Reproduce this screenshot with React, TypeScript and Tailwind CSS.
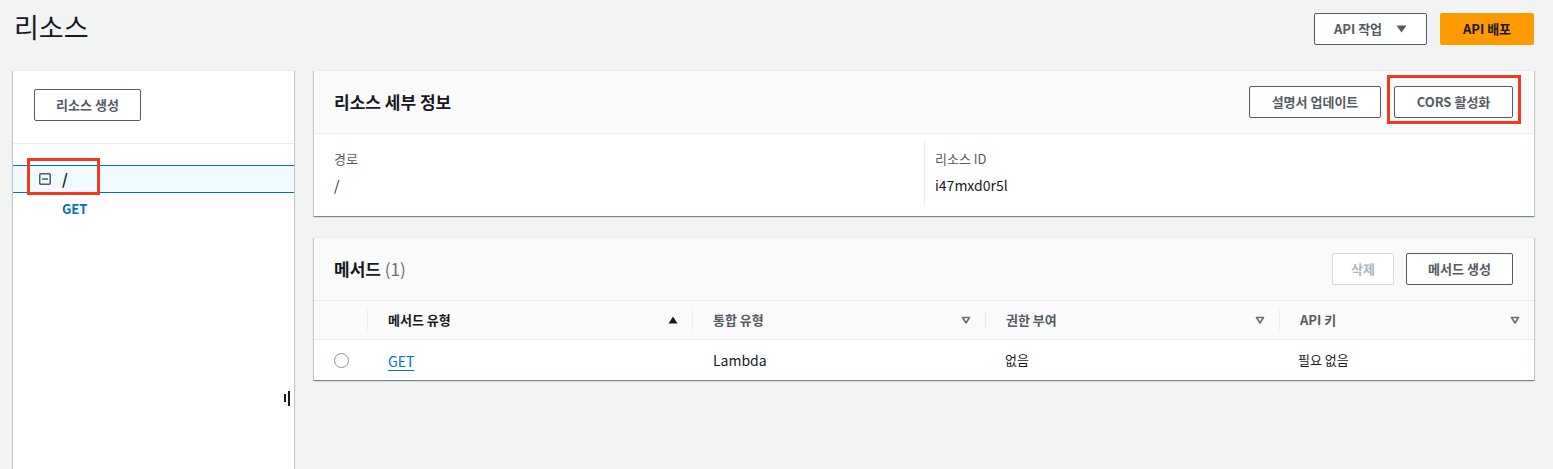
const panelShadow =
  "shadow-[0_1px_1px_0_rgba(0,28,36,0.3),1px_1px_1px_0_rgba(0,28,36,0.15),-1px_1px_1px_0_rgba(0,28,36,0.15)] border-t border-[#eaeded]";

function SortUp() {
  return (
    <svg width="10" height="8" viewBox="0 0 10 8">
      <path d="M5 0.5 L9.5 7.5 L0.5 7.5 Z" fill="#16191f" />
    </svg>
  );
}

function SortNone() {
  return (
    <svg width="10" height="8" viewBox="0 0 10 8">
      <path d="M1.5 1.5 L8.5 1.5 L5 7 Z" fill="none" stroke="#687078" strokeWidth="1.6" strokeLinejoin="round" />
    </svg>
  );
}

function HeadCell({ label, sorted, first }: { label: string; sorted?: boolean; first?: boolean }) {
  return (
    <div className="relative flex items-center justify-between h-full pl-[21px] pr-[14px]">
      <span className="absolute left-0 top-[9px] h-[20px] w-px bg-[#eaeded]" />
      <span className={"text-[13px] font-bold " + (first ? "text-[#16191f]" : "text-[#545b64]")}>{label}</span>
      {sorted ? <SortUp /> : <SortNone />}
    </div>
  );
}

export default function App() {
  return (
    <div className="h-[469px] overflow-hidden bg-[#f2f3f3] font-['Noto_Sans_CJK_KR',sans-serif] text-[#16191f] flex flex-col">
      {/* page header */}
      <header className="flex items-start justify-between pl-[14px] pr-[19px] pt-[12px] h-[70px] shrink-0">
        <h1 className="text-[27px] leading-[30px] font-normal">리소스</h1>
        <div className="flex gap-[13px] pt-[1px]">
          <button className="h-[32px] w-[113px] flex items-center justify-center gap-[14px] border border-[#545b64] rounded-[2px] bg-white text-[13px] font-bold text-[#545b64]">
            <span>API 작업</span>
            <svg width="11" height="8" viewBox="0 0 11 8">
              <path d="M0.5 0.5 L10.5 0.5 L5.5 7.5 Z" fill="#545b64" />
            </svg>
          </button>
          <button className="h-[32px] w-[94px] flex items-center justify-center rounded-[2px] bg-[#ff9900] text-[13px] font-bold text-[#16191f]">
            API 배포
          </button>
        </div>
      </header>

      <div className="flex flex-1 pl-[13px] pr-[19px] gap-[20px]">
        {/* resource tree */}
        <aside className={"relative w-[281px] shrink-0 bg-white " + panelShadow}>
          <div className="h-[73px] px-[21px] pt-[18px] border-b border-[#eaeded]">
            <button className="h-[32px] w-[107px] border border-[#545b64] rounded-[2px] bg-white text-[13px] font-bold text-[#545b64]">
              리소스 생성
            </button>
          </div>
          <div className="pt-[21px]">
            <div className="relative h-[28px] flex items-center border-y border-[#0073bb] bg-[#f1faff] pl-[26px]">
              <svg width="12" height="12" viewBox="0 0 12 12">
                <rect x="0.75" y="0.75" width="10.5" height="10.5" rx="1" fill="none" stroke="#545b64" strokeWidth="1.5" />
                <path d="M3 6 H9" stroke="#545b64" strokeWidth="1.5" />
              </svg>
              <span className="ml-[11px] text-[15px] font-bold text-[#16191f]">/</span>
              <span className="absolute left-[14px] top-[-8px] w-[73px] h-[37px] border-[3px] border-[#ee3a1f]" />
            </div>
            <div className="pl-[49px] pt-[6px] text-[13px] font-bold text-[#0073bb] leading-[20px]">GET</div>
          </div>
          <span className="absolute left-[271px] top-[323px] w-[2px] h-[8px] bg-[#16191f]" />
          <span className="absolute left-[275px] top-[320px] w-[2px] h-[15px] bg-[#16191f]" />
        </aside>

        {/* right column */}
        <main className="flex-1 flex flex-col gap-[21px]">
          {/* resource details */}
          <section className={"bg-white " + panelShadow}>
            <div className="h-[63px] flex items-center justify-between px-[20px] bg-[#fafafa] border-b border-[#eaeded]">
              <h2 className="text-[17px] font-bold">리소스 세부 정보</h2>
              <div className="flex items-center gap-[13px] pr-[1px]">
                <button className="h-[32px] w-[132px] border border-[#545b64] rounded-[2px] bg-white text-[13px] font-bold text-[#545b64]">
                  설명서 업데이트
                </button>
                <div className="relative">
                  <button className="h-[32px] w-[119px] border border-[#545b64] rounded-[2px] bg-white text-[13px] font-bold text-[#545b64]">
                    CORS 활성화
                  </button>
                  <span className="absolute left-[-7px] top-[-11px] w-[134px] h-[49px] border-[3px] border-[#ee3a1f]" />
                </div>
              </div>
            </div>
            <div className="grid grid-cols-2 px-[20px] pt-[6px] pb-[10px]">
              <div className="h-[66px] pt-[10px]">
                <div className="text-[13px] leading-[18px] text-[#545b64]">경로</div>
                <div className="mt-[7px] text-[14px] leading-[20px]">/</div>
              </div>
              <div className="h-[66px] pt-[10px] pl-[10px] border-l border-[#eaeded]">
                <div className="text-[13px] leading-[18px] text-[#545b64]">리소스 ID</div>
                <div className="mt-[7px] text-[14px] leading-[20px]">i47mxd0r5l</div>
              </div>
            </div>
          </section>

          {/* methods */}
          <section className={"bg-white " + panelShadow}>
            <div className="h-[62px] flex items-center justify-between px-[20px] bg-[#fafafa]">
              <h2 className="text-[17px] font-bold">
                메서드 <span className="font-normal text-[#687078]">(1)</span>
              </h2>
              <div className="flex items-center gap-[12px] pr-[1px]">
                <button className="h-[32px] w-[62px] border border-[#d5dbdb] rounded-[2px] bg-white text-[13px] font-bold text-[#aab7b8]">
                  삭제
                </button>
                <button className="h-[32px] w-[107px] border border-[#545b64] rounded-[2px] bg-white text-[13px] font-bold text-[#545b64]">
                  메서드 생성
                </button>
              </div>
            </div>
            <div className="grid grid-cols-[53px_325px_293px_294px_1fr] h-[40px] bg-[#fafafa] border-y border-[#eaeded]">
              <div />
              <HeadCell label="메서드 유형" sorted first />
              <HeadCell label="통합 유형" />
              <HeadCell label="권한 부여" />
              <HeadCell label="API 키" />
            </div>
            <div className="grid grid-cols-[53px_325px_293px_294px_1fr] h-[40px] items-center">
              <div className="flex justify-center pl-[1px]">
                <span className="w-[15px] h-[15px] rounded-full border-[1.5px] border-[#879596] bg-white" />
              </div>
              <div className="pl-[21px]">
                <span className="text-[14px] text-[#0073bb] underline underline-offset-[3px]">GET</span>
              </div>
              <div className="pl-[21px] text-[14px]">Lambda</div>
              <div className="pl-[20px] text-[13px]">없음</div>
              <div className="pl-[19px] text-[13px]">필요 없음</div>
            </div>
          </section>
        </main>
      </div>
    </div>
  );
}
